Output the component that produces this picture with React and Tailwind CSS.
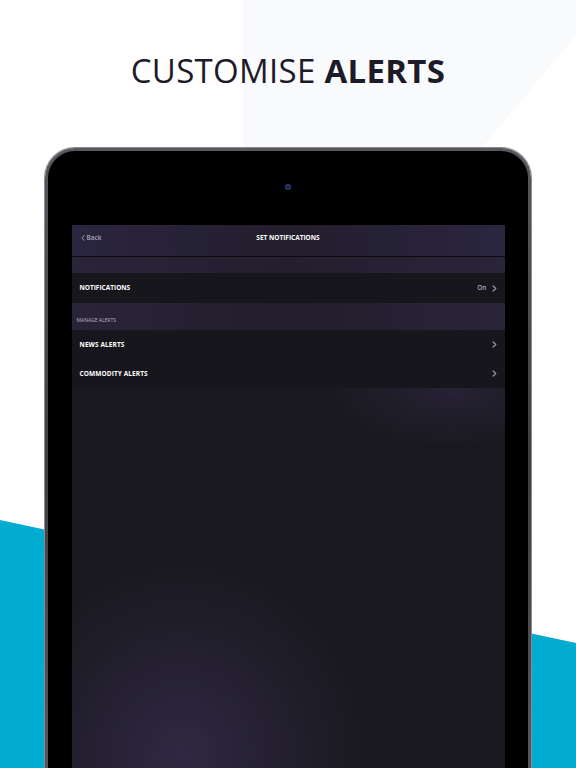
import React from 'react';

const font = { fontFamily: '"Open Sans", "Liberation Sans", sans-serif' };

function Chevron({ className = '' }) {
  return (
    <svg width="5" height="7" viewBox="0 0 5 7" className={className}>
      <path d="M1 0.8 L3.8 3.5 L1 6.2" fill="none" stroke="currentColor" strokeWidth="1.1" strokeLinecap="round" strokeLinejoin="round" />
    </svg>
  );
}

function Row({ label, right }) {
  return (
    <div className="h-[29px] flex items-center justify-between pl-[8px] pr-[8px] bg-[#17161c]">
      <span className="text-[6.5px] font-bold text-white tracking-[0.1px]">{label}</span>
      <div className="flex items-center gap-[5px] text-[#a8a6b0]">
        {right && <span className="text-[6.5px] font-semibold">{right}</span>}
        <Chevron />
      </div>
    </div>
  );
}

export default function App() {
  return (
    <div className="relative w-[576px] h-[768px] overflow-hidden bg-white" style={font}>
      {/* background shapes */}
      <svg className="absolute inset-0" width="576" height="768" viewBox="0 0 576 768">
        <polygon points="243,0 576,0 576,35 243,434" fill="#f9fafc" />
        <polygon points="0,520 576,643 576,768 0,768" fill="#02acd1" />
      </svg>

      <div className="relative flex flex-col items-center">
        <h1 className="pt-[51px] text-[33px] leading-[40px] text-[#1d1b29] tracking-[0.3px]">
          <span className="font-normal">CUSTOMISE </span>
          <span className="font-bold">ALERTS</span>
        </h1>

        {/* device */}
        <div className="mt-[57px] w-[486px] h-[640px] rounded-t-[30px] p-[3px] bg-gradient-to-b from-[#58585e] via-[#3e3e43] to-[#58585e] shadow-[0_0_0_1px_#8a8a90]">
          <div className="h-full rounded-t-[27px] bg-black flex flex-col items-center">
            <div className="h-[74px] w-full flex justify-center pt-[33px]">
              <div className="w-[6px] h-[6px] rounded-full bg-[#1c2548] shadow-[inset_0_0_1px_1px_#2f3a6a]" />
            </div>

            {/* screen */}
            <div className="relative w-[433px] flex-1 bg-[#19181e] overflow-hidden">
              <div className="absolute inset-0 bg-[radial-gradient(ellipse_130px_60px_at_380px_165px,#272235_0%,rgba(25,24,30,0)_100%)]" />
              <div className="absolute inset-0 bg-[radial-gradient(ellipse_190px_200px_at_110px_530px,#2f2843_0%,rgba(25,24,30,0)_100%)]" />

              <div className="relative flex flex-col">
                <div className="h-[31px] relative flex justify-center pt-[8px] bg-gradient-to-r from-[#2b2540] via-[#221e2c] to-[#2b2540]">
                  <div className="absolute left-[9px] top-[8px] flex items-center gap-[2px] text-[#a7a4b3]">
                    <svg width="4" height="6" viewBox="0 0 4 6">
                      <path d="M3.2 0.6 L0.9 3 L3.2 5.4" fill="none" stroke="currentColor" strokeWidth="0.9" strokeLinecap="round" strokeLinejoin="round" />
                    </svg>
                    <span className="text-[6.5px] font-semibold leading-[9px]">Back</span>
                  </div>
                  <span className="text-[6.5px] font-bold text-white leading-[9px]">SET NOTIFICATIONS</span>
                </div>
                <div className="h-px bg-[#0b0a0f]" />
                <div className="h-[16px] bg-gradient-to-r from-[#2a2439] via-[#231f2e] to-[#2a2439]" />

                <div className="h-[30px] flex items-center justify-between pl-[8px] pr-[8px] bg-[#17161c]">
                  <span className="text-[6.5px] font-bold text-white">NOTIFICATIONS</span>
                  <div className="flex items-center gap-[5px] text-[#a8a6b0]">
                    <span className="text-[6.5px] font-semibold">On</span>
                    <Chevron />
                  </div>
                </div>

                <div className="h-[27px] flex items-end pb-[6px] pl-[5px] bg-gradient-to-r from-[#2a2439] via-[#221e2c] to-[#2a2439]">
                  <span className="text-[5px] text-[#b5b2c0]">MANAGE ALERTS</span>
                </div>

                <Row label="NEWS ALERTS" />
                <Row label="COMMODITY ALERTS" />
              </div>
            </div>
          </div>
        </div>
      </div>
    </div>
  );
}
